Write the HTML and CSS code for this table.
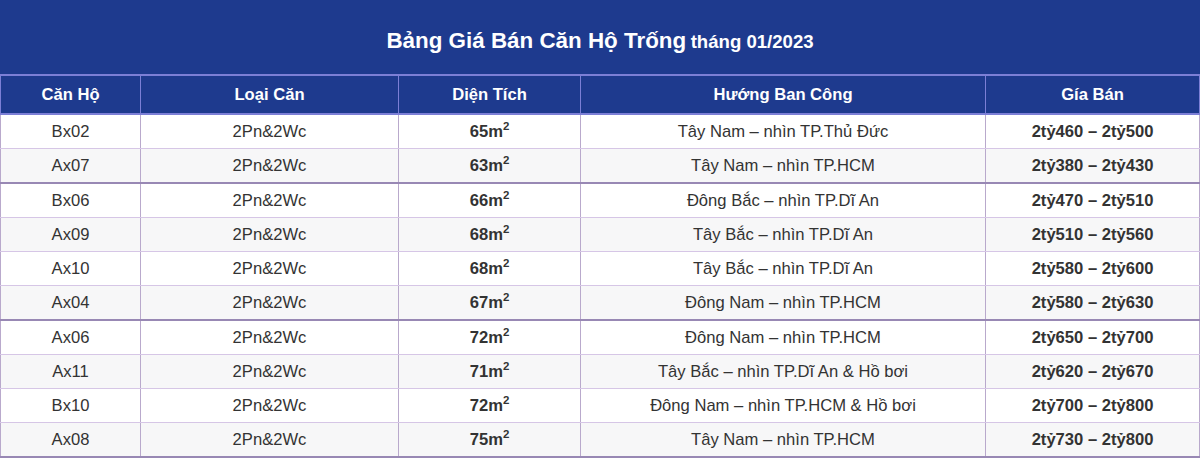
FILE: index.html
```html
<!DOCTYPE html>
<html lang="vi">
<head>
<meta charset="utf-8">
<link rel="stylesheet" href="styles.css">
</head>
<body>
<table class="price">
  <colgroup>
    <col class="c1"><col class="c2"><col class="c3"><col class="c4"><col class="c5">
  </colgroup>
  <thead>
    <tr class="title-row"><th colspan="5"><span class="t-main">Bảng Giá Bán Căn Hộ Trống</span> <span class="t-sub">tháng 01/2023</span></th></tr>
    <tr class="head-row"><th>Căn Hộ</th><th>Loại Căn</th><th>Diện Tích</th><th>Hướng Ban Công</th><th>Gía Bán</th></tr>
  </thead>
  <tbody>
    <tr><td>Bx02</td><td>2Pn&amp;2Wc</td><td class="b">65m<sup>2</sup></td><td>Tây Nam – nhìn TP.Thủ Đức</td><td class="b">2tỷ460 – 2tỷ500</td></tr>
    <tr class="dark"><td>Ax07</td><td>2Pn&amp;2Wc</td><td class="b">63m<sup>2</sup></td><td>Tây Nam – nhìn TP.HCM</td><td class="b">2tỷ380 – 2tỷ430</td></tr>
    <tr><td>Bx06</td><td>2Pn&amp;2Wc</td><td class="b">66m<sup>2</sup></td><td>Đông Bắc – nhìn TP.Dĩ An</td><td class="b">2tỷ470 – 2tỷ510</td></tr>
    <tr><td>Ax09</td><td>2Pn&amp;2Wc</td><td class="b">68m<sup>2</sup></td><td>Tây Bắc – nhìn TP.Dĩ An</td><td class="b">2tỷ510 – 2tỷ560</td></tr>
    <tr><td>Ax10</td><td>2Pn&amp;2Wc</td><td class="b">68m<sup>2</sup></td><td>Tây Bắc – nhìn TP.Dĩ An</td><td class="b">2tỷ580 – 2tỷ600</td></tr>
    <tr class="dark"><td>Ax04</td><td>2Pn&amp;2Wc</td><td class="b">67m<sup>2</sup></td><td>Đông Nam – nhìn TP.HCM</td><td class="b">2tỷ580 – 2tỷ630</td></tr>
    <tr><td>Ax06</td><td>2Pn&amp;2Wc</td><td class="b">72m<sup>2</sup></td><td>Đông Nam – nhìn TP.HCM</td><td class="b">2tỷ650 – 2tỷ700</td></tr>
    <tr><td>Ax11</td><td>2Pn&amp;2Wc</td><td class="b">71m<sup>2</sup></td><td>Tây Bắc – nhìn TP.Dĩ An &amp; Hồ bơi</td><td class="b">2tỷ620 – 2tỷ670</td></tr>
    <tr><td>Bx10</td><td>2Pn&amp;2Wc</td><td class="b">72m<sup>2</sup></td><td>Đông Nam – nhìn TP.HCM &amp; Hồ bơi</td><td class="b">2tỷ700 – 2tỷ800</td></tr>
    <tr class="dark"><td>Ax08</td><td>2Pn&amp;2Wc</td><td class="b">75m<sup>2</sup></td><td>Tây Nam – nhìn TP.HCM</td><td class="b">2tỷ730 – 2tỷ800</td></tr>
  </tbody>
</table>
</body>
</html>
```
FILE: styles.css
```css
html, body {
  margin: 0;
  padding: 0;
  background: #ffffff;
}
body {
  font-family: "Liberation Sans", Arial, sans-serif;
  color: #333333;
}
.price {
  width: 1199px;
  border-collapse: collapse;
  table-layout: fixed;
}
.c1 { width: 140px; }
.c2 { width: 258px; }
.c3 { width: 182px; }
.c4 { width: 405px; }
.c5 { width: 214px; }

.title-row th {
  background: #1e3a8e;
  color: #ffffff;
  height: 66px;
  padding: 7px 0 0 0;
  text-align: center;
  border: 1px solid #1e3a8e;
  border-bottom: 2px solid #7c7fd6;
}
.t-main {
  font-size: 22.4px;
  font-weight: bold;
}
.t-sub {
  font-size: 18.6px;
  font-weight: bold;
}
.head-row th {
  background: #1e3a8e;
  color: #ffffff;
  font-size: 16.6px;
  font-weight: bold;
  height: 37px;
  padding: 0;
  text-align: center;
  border: 1px solid #7c7fd6;
  border-top: 0;
  border-bottom: 2px solid #7c7fd6;
}
td {
  height: 33px;
  padding: 0;
  text-align: center;
  font-size: 16.6px;
  border: 1px solid #d6c6e6;
  border-left-color: #b9a9cc;
  border-right-color: #b9a9cc;
  background: #ffffff;
}
tr.dark td {
  border-bottom: 2px solid #9888b4;
}
tbody tr:nth-child(even) td {
  background: #f7f7f8;
}
.b {
  font-weight: bold;
}
sup {
  font-size: 11.5px;
  line-height: 0;
  vertical-align: 7px;
}
```
